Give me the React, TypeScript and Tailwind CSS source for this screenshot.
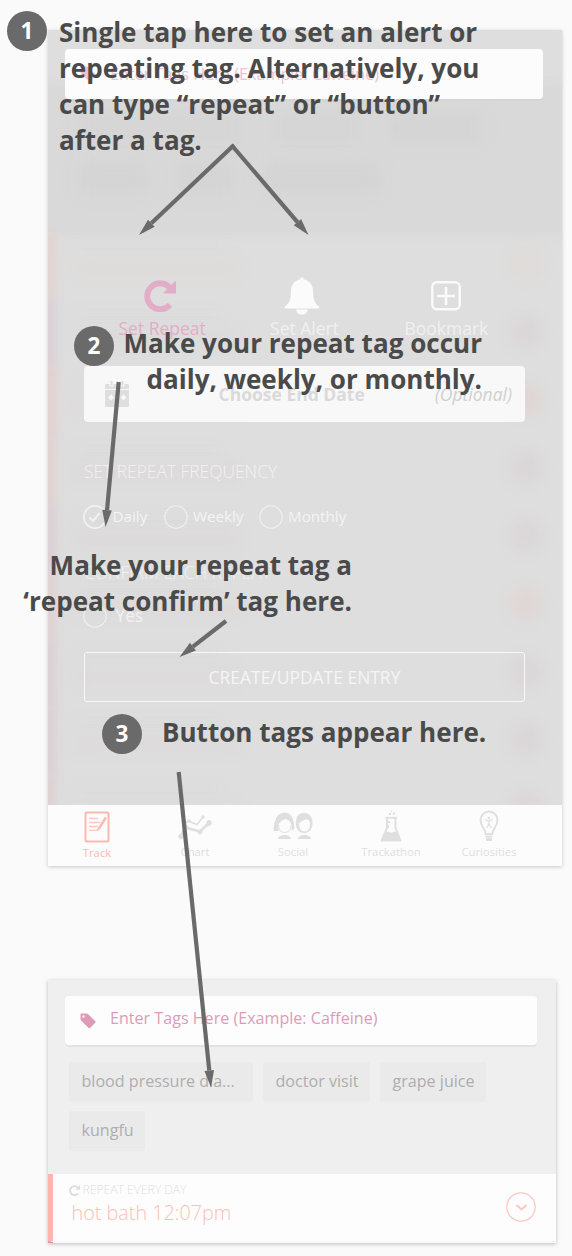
import React from "react";
import clsx from "clsx";

const rows = [
  { bar: "bg-[#e1d3d1]", dot: "bg-[#dedbd9]", line: "bg-[#dedad8]" },
  { bar: "bg-[#dacfd5]", dot: "bg-[#dbd7d9]", line: "bg-[#dbdadb]" },
  { bar: "bg-[#e3d0ce]", dot: "bg-[#dfd6d4]", line: "bg-[#dedad9]" },
  { bar: "bg-[#e1d1d0]", dot: "bg-[#dbd7d8]", line: "bg-[#dcd8d9]" },
  { bar: "bg-[#dbcfd3]", dot: "bg-[#dbd7d8]", line: "bg-[#dcd7d8]" },
  { bar: "bg-[#e0d1d2]", dot: "bg-[#dfd7d5]", line: "bg-[#ddd9d8]" },
  { bar: "bg-[#dccfd3]", dot: "bg-[#dcd7d8]", line: "bg-[#dcd9da]" },
  { bar: "bg-[#dccfd3]", dot: "bg-[#dbd7d8]", line: "bg-[#dcd9da]" },
  { bar: "bg-[#ddd1d3]", dot: "bg-[#dcd6d7]", line: "bg-[#dcd9da]" },
];

function BlurredFeed() {
  return (
    <div className="absolute inset-x-0 top-0 h-[775px] overflow-hidden bg-[#dedede]">
      <div className="mt-[57px] h-[145px] bg-[#d9d9d9] pl-[30px] pt-[26px] shadow-[0_0_14px_3px_#d9d9d9]">
        <div className="flex gap-[28px] blur-[8px]">
          <div className="h-[30px] w-[165px] bg-[#d5d5d5]" />
          <div className="h-[30px] w-[90px] bg-[#d5d5d5]" />
          <div className="h-[30px] w-[92px] bg-[#d4d4d4]" />
        </div>
        <div className="mt-[20px] flex gap-[28px] blur-[8px]">
          <div className="h-[30px] w-[70px] bg-[#d4d4d4]" />
          <div className="h-[30px] w-[58px] bg-[#d4d4d4]" />
          <div className="h-[30px] w-[118px] bg-[#d4d4d4]" />
        </div>
      </div>
      <div>
        {rows.map((r, i) => (
          <div key={i} className="flex h-[68px] items-start">
            <div className={clsx("-ml-[4px] h-[68px] w-[12px] blur-[4px]", r.bar)} />
            <div className="ml-[18px] flex-1 pt-[10px]">
              <div className="h-[7px] w-[150px] bg-[#dcdcdc] blur-[5px]" />
              <div className={clsx("mt-[13px] h-[12px] w-[165px] blur-[7px]", r.line)} />
            </div>
            <div className={clsx("mr-[19px] mt-[15px] size-[34px] rounded-full blur-[6px]", r.dot)} />
          </div>
        ))}
      </div>
    </div>
  );
}

function TagIcon({ className }: { className: string }) {
  return (
    <svg viewBox="0 0 16 16" className={className} fill="currentColor">
      <path
        fillRule="evenodd"
        d="M1.2.5h5.2c.6 0 1.300.3 1.800.8l6.900 6.600c.6.600.6 1.300.1 1.900l-4.900 5c-.6.600-1.300.6-1.900 0L1.500 8.100C1 7.600.5 6.800.5 6.100V1.200C.5.800.8.500 1.200.500zM3.500 2.300a1.200 1.200 0 100 2.400 1.200 1.200 0 000-2.400z"
      />
    </svg>
  );
}

function RepeatIcon({ className }: { className: string }) {
  return (
    <svg viewBox="0 0 32 32" className={className}>
      <path d="M25.500 7.200A13 13 0 1 0 26 24.800" fill="none" stroke="currentColor" strokeWidth="5.800" />
      <path d="M32 1.800v11.800h-11.600c-.8 0-1-.8-.5-1.300l10.700-10.800c.5-.5 1.400-.3 1.400.3z" fill="currentColor" />
    </svg>
  );
}

function BellIcon() {
  return (
    <svg viewBox="0 0 36 40" className="h-[40px] w-[36px] text-[#fbfbfb]" fill="currentColor">
      <path d="M18 1.200c1.200 0 1.700.9 1.900 2.200 5.800 1.100 9.100 5.700 9.200 11.500.1 8 1.200 12 6 15.500.6.600.2 2-.8 2H1.700c-1 0-1.400-1.400-.8-2 4.800-3.500 5.900-7.500 6-15.500.1-5.800 3.400-10.400 9.200-11.500.2-1.300.7-2.200 1.900-2.200z" />
      <path d="M12.300 33.400h11.400c-.2 3.300-2.500 5.200-5.700 5.200s-5.500-1.900-5.700-5.200z" />
    </svg>
  );
}

function PlusBoxIcon() {
  return (
    <svg viewBox="0 0 30 30" className="size-[30px] text-[#fafafa]" fill="none" stroke="currentColor">
      <rect x="1.300" y="1.300" width="27.400" height="27" rx="4.500" strokeWidth="2.400" />
      <path d="M15 6v18M6 15h18" strokeWidth="2.600" />
    </svg>
  );
}

function CalendarIcon() {
  return (
    <svg viewBox="0 0 26 28" className="h-[28px] w-[26px]">
      <path d="M2.500 4h3v2.500h4V4h7v2.500h4V4h3c1 0 1.500.7 1.500 1.500V9H1V5.500C1 4.700 1.500 4 2.500 4z" fill="#dedede" />
      <path d="M6.500 1h2v4.500h-2zM17.500 1h2v4.500h-2zM1 10h24v15.500c0 1-.6 1.500-1.500 1.500h-21C1.600 27 1 26.500 1 25.500z" fill="#dedede" />
      <path d="M7 14.500l3 3-3 3-3-3zM19.500 14.500l3 3-3 3-3-3z" fill="#f8f8f8" />
    </svg>
  );
}

function Radio({ checked }: { checked?: boolean }) {
  return (
    <svg viewBox="0 0 24 24" className="size-[24px] shrink-0 text-[#f1f1f1]" fill="none" stroke="currentColor">
      <circle cx="12" cy="12" r="11.200" strokeWidth={checked ? 1.7 : 1.1} />
      {checked && <path d="M6.500 12.500l3.500 3.500 6.500-8" strokeWidth="2.200" />}
    </svg>
  );
}

const navIcons = {
  Track: (
    <svg viewBox="0 0 26 32" className="h-[32px] w-[26px]" fill="none" stroke="currentColor">
      <rect x="1.500" y="1.500" width="23" height="29" rx="1.500" strokeWidth="2" />
      <path d="M5 7.500h9M5 11.500h11M5 15.500h9M5 19.300h8" strokeWidth="1.300" opacity=".75" />
      <path d="M21 6l-6.500 10.500-1.500 3.500 3-2.200L22.500 7.200z" fill="currentColor" strokeWidth=".6" />
    </svg>
  ),
  Chart: (
    <svg viewBox="0 0 36 28" className="h-[28px] w-[36px]" fill="currentColor" stroke="currentColor">
      <path d="M4 24.500L8 15.500l15 4L32 11" fill="none" strokeWidth="2.800" />
      <path d="M5 15l6-6 9 3.500 6-7.500" fill="none" strokeWidth="1.500" />
      <circle cx="4" cy="24.500" r="2.300" />
      <circle cx="9" cy="15" r="2" />
      <circle cx="23" cy="20" r="2" />
      <circle cx="32" cy="11" r="2.400" />
      <circle cx="26" cy="5" r="1.200" />
      <circle cx="12" cy="9" r="1.200" />
    </svg>
  ),
  Social: (
    <svg viewBox="0 0 42 30" className="h-[30px] w-[42px]" fill="currentColor">
      <path d="M1.500 20C2 10 4.500 1.500 12.500 1.500S22 10 22.500 17.500l-3 2.500c.3-1.500.3-3 .2-4.500C19.300 12 17.500 9 13.500 8 9.500 9.500 6.300 12 6.200 15.500c0 1.800.3 3 .8 4.500z" />
      <path d="M6.500 14c0 5 2.600 7.500 6 7.500s6.700-2.500 6.700-7.500" fill="none" stroke="currentColor" strokeWidth="1" />
      <path fillRule="evenodd" d="M24 14C23 6 27 1.800 32 1.800S41 6 40.500 13c-.4 5-3.300 9-8 9s-8-3-8.500-8zm3-1.500c0 4.500 2 8 5.500 8s5.500-3 5.500-7c0-2.500-1-4.500-3-5.500-2.500 1-5.500 1.500-8 4.500z" />
      <path d="M6 28c.5-3 3.500-4 6.500-4s6 1 6.500 4zM26 28c.5-3 3.500-4 6.500-4s6 1 6.500 4z" />
    </svg>
  ),
  Trackathon: (
    <svg viewBox="0 0 22 34" className="h-[34px] w-[22px]">
      <path d="M5.500 8.800h11.500" stroke="currentColor" strokeWidth="1.800" />
      <path d="M7 9v10L1.500 31.500h19L15.500 19V9" fill="none" stroke="currentColor" strokeWidth="1.900" strokeLinejoin="round" />
      <path d="M5.500 23.500c3-2 4.500 1 7 0s2.500-1.500 4.500-.5l4 9H1.500zM7 12h3v2H7zM7 16h2v3H7z" fill="currentColor" />
      <circle cx="10" cy="5" r="1.200" fill="currentColor" />
      <circle cx="14" cy="4.500" r="1.300" fill="currentColor" />
      <circle cx="11.500" cy="2" r=".8" fill="currentColor" />
    </svg>
  ),
  Curiosities: (
    <svg viewBox="0 0 20 32" className="h-[32px] w-[20px]" fill="none" stroke="currentColor">
      <path d="M6.700 24C6.500 19 1.500 16.500 1.500 10A8.500 8.500 0 0 1 18.500 10C18.500 16.500 13.500 19 13.300 24z" strokeWidth="1.900" />
      <path d="M6.500 26.500h7" strokeWidth="1.600" />
      <path d="M7 27.500h6V31H7z" fill="currentColor" stroke="none" />
      <path d="M6 9.500l4 1.500 4-1.500M10 10.500v3.500l-2.500 4M10 14l2.500 4" strokeWidth="1.200" />
      <circle cx="10" cy="8" r="1.300" fill="currentColor" stroke="none" />
    </svg>
  ),
};

function BottomNav() {
  return (
    <div className="relative mt-auto flex h-[61px] bg-[#fcfcfc] pr-[24px]">
      {(Object.keys(navIcons) as (keyof typeof navIcons)[]).map((name) => (
        <div
          key={name}
          className={clsx(
            "flex w-[98px] flex-col items-center",
            name === "Track" ? "pt-[4px] text-[#fbb8af]" : "pt-[3px] text-[#dfdfdf]",
          )}
        >
          <div className="flex h-[36px] items-center">{navIcons[name]}</div>
          <div className="text-[11.300px] leading-[15px]">{name}</div>
        </div>
      ))}
    </div>
  );
}

function PhoneEditor() {
  return (
    <div className="relative ml-[48px] mt-[30px] flex h-[836px] w-[514px] flex-col shadow-[0_1px_4px_rgba(0,0,0,0.2)]">
      <BlurredFeed />
      <div className="relative ml-[17px] mt-[19px] flex h-[50px] w-[478px] items-center rounded-[4px] bg-[#fcfcfc] pl-[15px] text-[#ebc3d4] shadow-[0_2px_0_#d5d5d5]">
        <TagIcon className="size-[16px]" />
        <span className="ml-[14px] pt-[1px] text-[16.200px]">Enter Tags Here (Example: Caffeine)</span>
      </div>

      <div className="relative ml-[43px] mt-[177px] grid w-[427px] grid-cols-3 text-[17.500px] leading-[24px] text-[#f0f0f0]">
        <div className="flex flex-col items-center text-[#e2adc6]">
          <div className="flex h-[40px] items-center pr-[4px]">
            <RepeatIcon className="size-[32px]" />
          </div>
          <span>Set Repeat</span>
        </div>
        <div className="flex flex-col items-center">
          <div className="flex h-[40px] items-center pr-[4px]">
            <BellIcon />
          </div>
          <span>Set Alert</span>
        </div>
        <div className="flex flex-col items-center pr-[1px]">
          <div className="flex h-[40px] items-center">
            <PlusBoxIcon />
          </div>
          <span>Bookmark</span>
        </div>
      </div>

      <div className="relative ml-[36px] mt-[26px] flex h-[56px] w-[441px] items-center rounded-[4px] bg-[#f8f8f8] pl-[20px] pr-[13px] text-[17.500px] text-[#dadada]">
        <CalendarIcon />
        <span className="ml-[88.500px] font-bold">Choose End Date</span>
        <span className="ml-auto italic text-[#d0d0d0]">(Optional)</span>
      </div>

      <div className="relative ml-[36px] mt-[36.500px] text-[17.400px] font-light leading-[24px] text-[#f2f2f2]">
        SET REPEAT FREQUENCY
      </div>
      <div className="relative ml-[35px] mt-[22.500px] flex h-[24px] items-center text-[15.200px] text-[#f4f4f4]">
        <Radio checked />
        <span className="ml-[5.500px] w-[51px] pb-[2px]">Daily</span>
        <Radio />
        <span className="ml-[5.500px] w-[66px] pb-[2px]">Weekly</span>
        <Radio />
        <span className="ml-[5px] pb-[2px]">Monthly</span>
      </div>
      <div className="relative ml-[36px] mt-[31px] text-[17.400px] font-light leading-[24px] text-[#f2f2f2]">
        CONFIRM EACH REPEAT
      </div>
      <div className="relative ml-[35px] mt-[20px] flex h-[24px] items-center text-[17.300px] text-[#f2f2f2]">
        <Radio />
        <span className="ml-[8.500px]">Yes</span>
      </div>
      <div className="relative ml-[36px] mt-[24px] flex h-[50px] w-[441px] items-center justify-center rounded-[3px] border-[1.500px] border-[#f8f8f8] text-[17.450px] text-[#f5f5f5]">
        CREATE/UPDATE ENTRY
      </div>
      <BottomNav />
    </div>
  );
}

function Chip({ children, className }: { children: React.ReactNode; className: string }) {
  return (
    <div className={clsx("flex h-[40px] items-center rounded-[3px] bg-[#eaeaea] pb-px pl-[12.500px] text-[16.100px] text-[#aeaeae]", className)}>
      {children}
    </div>
  );
}

function ButtonTagsCard() {
  return (
    <div className="ml-[48px] mt-[114px] h-[263px] w-[508px] bg-[#fdfdfd] shadow-[0_1px_4px_rgba(0,0,0,0.25)]">
      <div className="h-[194px] bg-[#efefef] pl-[17px] pt-[16px]">
        <div className="flex h-[49px] w-[472px] items-center rounded-[4px] bg-[#fdfdfd] pl-[15px] text-[#dc9cb8] shadow-[0_2px_0_#e3e3e3]">
          <TagIcon className="size-[16px]" />
          <span className="ml-[14px] pb-[4px] text-[16.100px]">Enter Tags Here (Example: Caffeine)</span>
        </div>
        <div className="ml-[4px] mt-[17px] flex flex-wrap gap-x-[10px] gap-y-[9px]">
          <Chip className="w-[184px]">blood pressure dia...</Chip>
          <Chip className="w-[107px]">doctor visit</Chip>
          <Chip className="w-[106px]">grape juice</Chip>
          <Chip className="w-[76px]">kungfu</Chip>
        </div>
      </div>
      <div className="flex h-[67px] justify-between border-l-[5px] border-[#ffb5ab] pl-[16px] pr-[20px]">
        <div className="pt-[8px]">
          <div className="flex items-center text-[12.150px] font-light leading-[16px] text-[#dedede]">
            <RepeatIcon className="size-[11px]" />
            <span className="ml-[2.500px]">REPEAT EVERY DAY</span>
          </div>
          <div className="ml-[2.500px] mt-[1px] text-[19.800px] font-light leading-[28px] text-[#fbbfb6]">hot bath 12:07pm</div>
        </div>
        <svg viewBox="0 0 30 30" className="mt-[18px] size-[30px] text-[#fbc8c1]" fill="none" stroke="currentColor">
          <circle cx="15" cy="15" r="14.200" strokeWidth="1.200" />
          <path d="M10.500 13l5 4.500 5-4.500" strokeWidth="2" />
        </svg>
      </div>
      <div className="h-[2px] border-l-[5px] border-t border-l-[#dc8fae] border-t-[#f3f3f3]" />
    </div>
  );
}

function Arrow({ from, to }: { from: [number, number]; to: [number, number] }) {
  const len = Math.hypot(to[0] - from[0], to[1] - from[1]);
  const ux = (to[0] - from[0]) / len;
  const uy = (to[1] - from[1]) / len;
  const bx = to[0] - ux * 17;
  const by = to[1] - uy * 17;
  return (
    <>
      <line x1={from[0]} y1={from[1]} x2={bx} y2={by} stroke="#6a6a6a" strokeWidth="4.200" />
      <polygon points={`${to[0]},${to[1]} ${bx - uy * 4.8},${by + ux * 4.8} ${bx + uy * 4.8},${by - ux * 4.8}`} fill="#6a6a6a" />
    </>
  );
}

function Arrows() {
  return (
    <svg viewBox="0 0 572 1256" className="absolute left-0 top-0 h-[1256px] w-[572px]">
      <Arrow from={[234, 145]} to={[139, 235]} />
      <Arrow from={[231.5, 145]} to={[308.5, 235]} />
      <Arrow from={[118.700, 382]} to={[105.500, 527]} />
      <Arrow from={[226, 621]} to={[179.500, 657]} />
      <Arrow from={[178.700, 772]} to={[211, 1087.500]} />
    </svg>
  );
}

function Step({ n, className }: { n: number; className: string }) {
  return (
    <div
      className={clsx(
        "absolute flex size-[40px] items-center justify-center rounded-full bg-[#6a6a6a] text-[22.500px] font-bold leading-none text-white",
        className,
      )}
    >
      {n}
    </div>
  );
}

function Note({ lines, className }: { lines: string[]; className: string }) {
  return (
    <div className={clsx("absolute whitespace-nowrap text-[26.050px] font-bold leading-[36px] text-[#4a4a4a]", className)}>
      {lines.map((l) => (
        <div key={l}>{l}</div>
      ))}
    </div>
  );
}

export default function App() {
  return (
    <div className="relative flex h-[1256px] w-[572px] flex-col overflow-hidden bg-[#fafafa] font-['Open_Sans',sans-serif]">
      <PhoneEditor />
      <ButtonTagsCard />
      <Step n={1} className="left-[7px] top-[11px]" />
      <Note
        className="left-[59px] top-[14px]"
        lines={["Single tap here to set an alert or", "repeating tag. Alternatively, you", "can type “repeat” or “button”", "after a tag."]}
      />
      <Step n={2} className="left-[74px] top-[326px]" />
      <Note className="right-[90px] top-[325px] text-right" lines={["Make your repeat tag occur", "daily, weekly, or monthly."]} />
      <Note className="right-[220px] top-[547px] text-right" lines={["Make your repeat tag a", "‘repeat confirm’ tag here."]} />
      <Step n={3} className="left-[102px] top-[714px]" />
      <Note className="left-[162px] top-[714px]" lines={["Button tags appear here."]} />
      <Arrows />
    </div>
  );
}
